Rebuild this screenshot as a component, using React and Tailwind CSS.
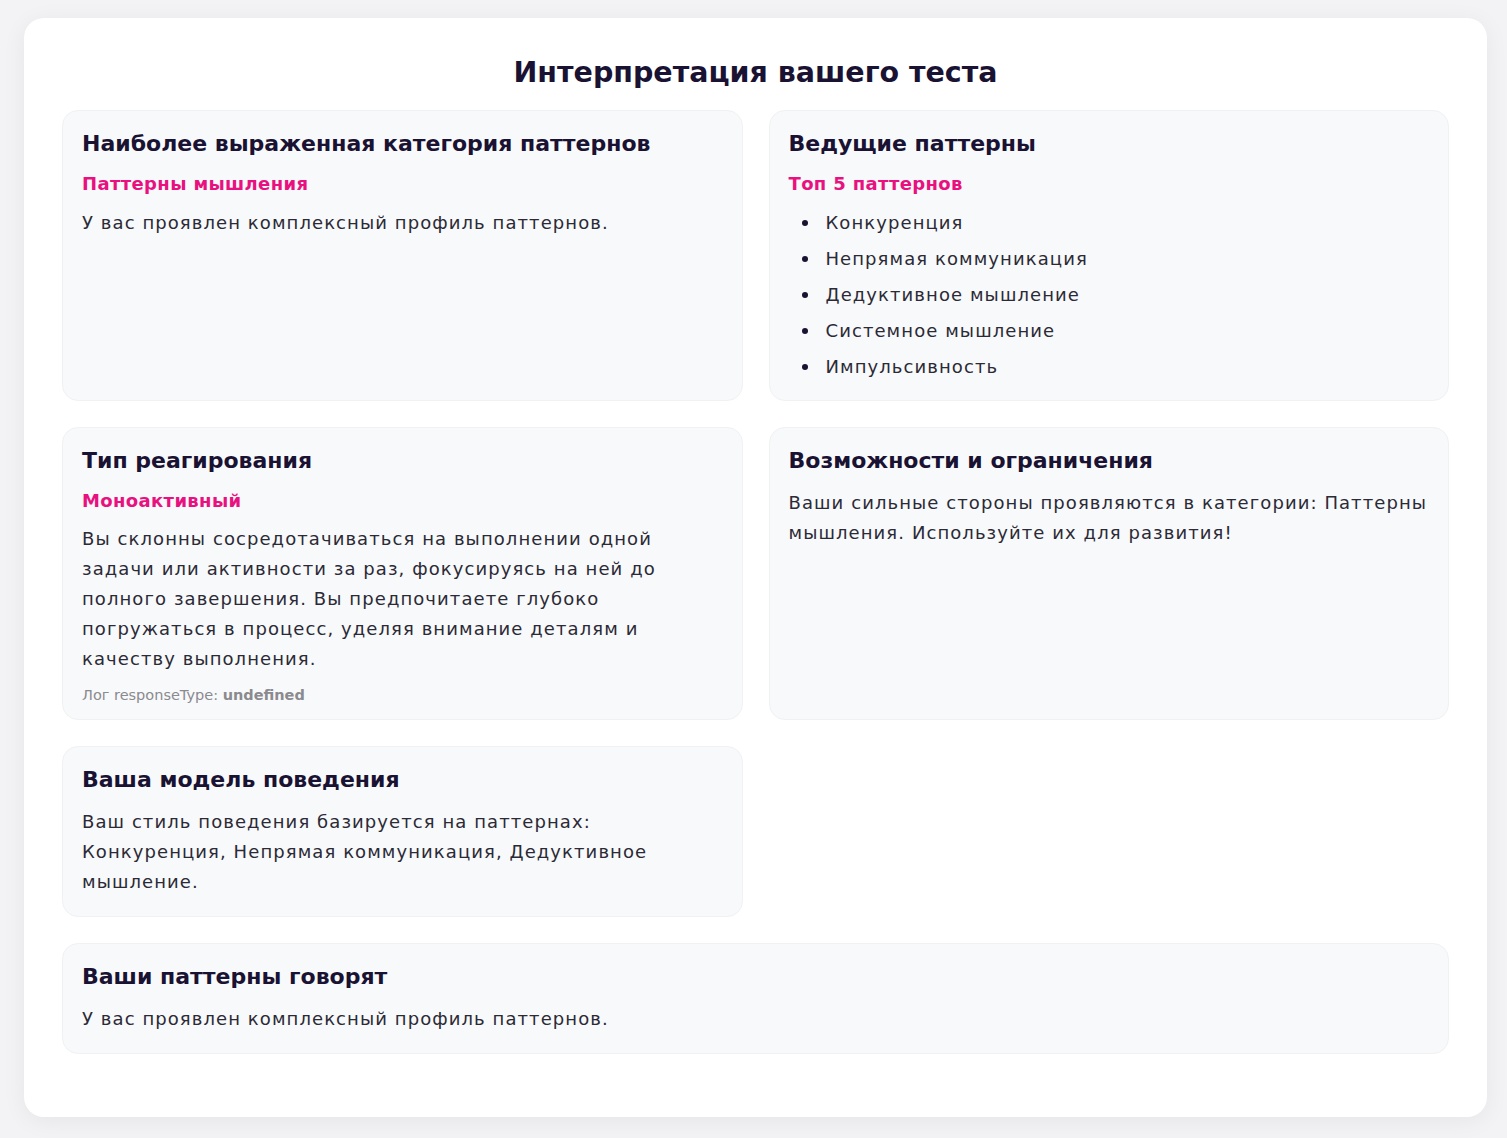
import React from "react";

const font = { fontFamily: "'DejaVu Sans', sans-serif" };

function Card({ title, sub, children, className = "" }) {
  return (
    <div className={"rounded-2xl border border-[#f0f1f3] bg-[#f8f9fa] px-[19px] pt-[19px] pb-[19px] " + className}>
      <h3 className="text-[22px] leading-[28px] font-bold text-[#1a1233]">{title}</h3>
      {sub && <div className="mt-[14px] text-[18px] leading-[24px] font-bold tracking-[0.02em] text-[#e8117f]">{sub}</div>}
      {children}
    </div>
  );
}

const body = "text-[18px] leading-[30px] tracking-[0.06em] text-[#2b2a36]";

export default function App() {
  const items = ["Конкуренция", "Непрямая коммуникация", "Дедуктивное мышление", "Системное мышление", "Импульсивность"];
  return (
    <div className="min-h-[1138px] bg-[#f3f3f5] pl-[24px] pr-[20px] pt-[18px] pb-[23px]" style={font}>
      <div className="rounded-[20px] bg-white px-[38px] pt-[37px] pb-[63px] shadow-[0_4px_24px_rgba(0,0,0,0.06)]">
        <h1 className="text-center text-[28.5px] leading-[36px] font-bold text-[#1a1233]">Интерпретация вашего теста</h1>
        <div className="mt-[19px] grid grid-cols-2 gap-[26px]">
          <Card title="Наиболее выраженная категория паттернов" sub="Паттерны мышления">
            <p className={"mt-[12px] " + body}>У вас проявлен комплексный профиль паттернов.</p>
          </Card>
          <Card title="Ведущие паттерны" sub="Топ 5 паттернов">
            <ul className="mt-[13px] flex flex-col gap-[8px]">
              {items.map((t) => (
                <li key={t} className="flex items-center text-[18px] leading-[28px] tracking-[0.06em] text-[#2b2a36]">
                  <span className="ml-[13px] mr-[18px] h-[6px] w-[6px] shrink-0 rounded-full bg-[#1a1233]"></span>
                  {t}
                </li>
              ))}
            </ul>
          </Card>
          <Card title="Тип реагирования" sub="Моноактивный">
            <p className={"mt-[11px] " + body}>
              Вы склонны сосредотачиваться на выполнении одной задачи или активности за раз, фокусируясь на ней до полного завершения. Вы предпочитаете глубоко погружаться в процесс, уделяя внимание деталям и качеству выполнения.
            </p>
            <div className="mt-[13px] mb-[-3px] text-[14.5px] leading-[16px] text-[#8a8a8f]">
              Лог responseType: <b className="font-bold">undefined</b>
            </div>
          </Card>
          <Card title="Возможности и ограничения">
            <p className={"mt-[13px] " + body}>
              Ваши сильные стороны проявляются в категории: Паттерны мышления. Используйте их для развития!
            </p>
          </Card>
          <Card title="Ваша модель поведения">
            <p className={"mt-[13px] " + body}>
              Ваш стиль поведения базируется на паттернах: Конкуренция, Непрямая коммуникация, Дедуктивное мышление.
            </p>
          </Card>
          <div></div>
          <Card title="Ваши паттерны говорят" className="col-span-2">
            <p className={"mt-[13px] " + body}>У вас проявлен комплексный профиль паттернов.</p>
          </Card>
        </div>
      </div>
    </div>
  );
}
